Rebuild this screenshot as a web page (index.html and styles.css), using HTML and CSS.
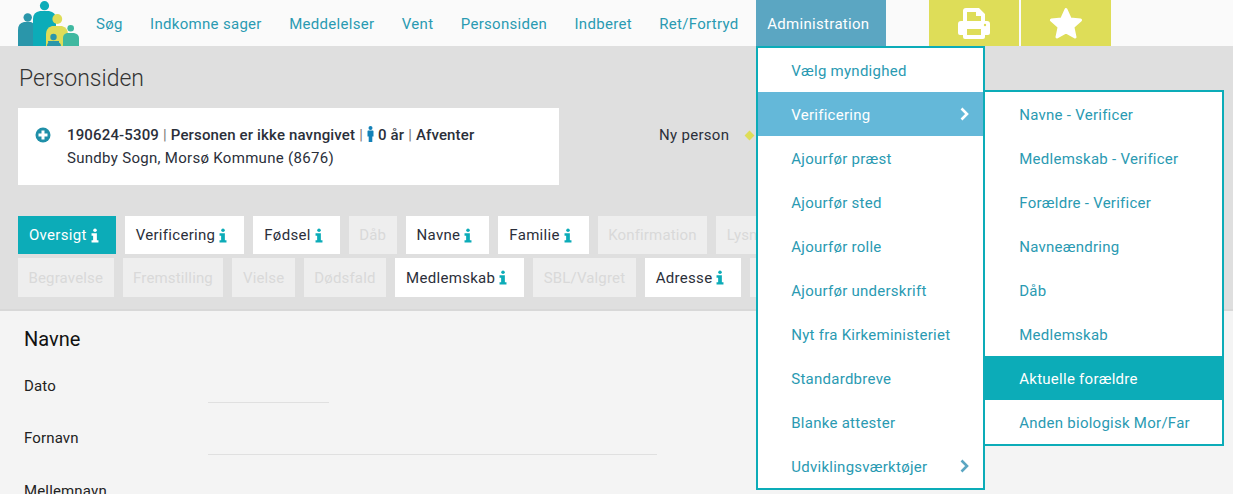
FILE: index.html
```html
<!DOCTYPE html>
<html lang="da">
<head>
<meta charset="utf-8">
<title>Personsiden</title>
<link rel="stylesheet" href="styles.css">
</head>
<body>
<svg class="defs" width="0" height="0" aria-hidden="true">
  <symbol id="info" viewBox="0 0 9 16">
    <circle cx="4.5" cy="2" r="2"/>
    <path d="M.6 5.6h6v7.8H8.4V16H.6v-2.6h1.8V8.2H.6z"/>
  </symbol>
</svg>
<header class="topbar">
  <svg class="logo" width="62" height="46" viewBox="18 0 62 46" aria-hidden="true">
    <circle cx="27.7" cy="17.5" r="4.2" fill="#2a96aa"/>
    <path d="M18 46V30q0-7 6-8h7q4 1 4 8v16z" fill="#2a96aa"/>
    <circle cx="44.5" cy="5.7" r="4.6" fill="#0cacb8"/>
    <path d="M33 46V19q0-7 7-8h9q7 1 7 8v27z" fill="#0cacb8"/>
    <circle cx="57.3" cy="19" r="4.9" fill="#dedd58"/>
    <path d="M46 46V34q0-6 6-8h10q6 2 6 8v12z" fill="#dedd58"/>
    <circle cx="70.7" cy="28.3" r="3.3" fill="#3fb8a0"/>
    <path d="M63 46V38q0-4 4-5h7q5 1 5 5v8z" fill="#3fb8a0"/>
    <circle cx="53.5" cy="37" r="3.2" fill="#2a96aa"/>
    <path d="M48 41h11v1.500h-11zM47 46q0-4 4-4h5q5 0 5 4z" fill="#2a96aa"/>
  </svg>
  <nav class="nav">
    <a class="nav-item">Søg</a>
    <a class="nav-item">Indkomne sager</a>
    <a class="nav-item">Meddelelser</a>
    <a class="nav-item">Vent</a>
    <a class="nav-item">Personsiden</a>
    <a class="nav-item">Indberet</a>
    <a class="nav-item">Ret/Fortryd</a>
    <div class="nav-item nav-active">Administration
      <ul class="menu">
        <li class="menu-item">Vælg myndighed</li>
        <li class="menu-item menu-open">Verificering
          <svg class="chev" width="9" height="14" viewBox="0 0 9 14"><path d="M1.500 1.500 7 7l-5.500 5.500" fill="none" stroke="currentColor" stroke-width="2.600"/></svg>
          <ul class="submenu">
            <li class="menu-item sub-item">Navne - Verificer</li>
            <li class="menu-item sub-item">Medlemskab - Verificer</li>
            <li class="menu-item sub-item">Forældre - Verificer</li>
            <li class="menu-item sub-item">Navneændring</li>
            <li class="menu-item sub-item">Dåb</li>
            <li class="menu-item sub-item">Medlemskab</li>
            <li class="menu-item sub-item sub-current">Aktuelle forældre</li>
            <li class="menu-item sub-item">Anden biologisk Mor/Far</li>
          </ul>
        </li>
        <li class="menu-item">Ajourfør præst</li>
        <li class="menu-item">Ajourfør sted</li>
        <li class="menu-item">Ajourfør rolle</li>
        <li class="menu-item">Ajourfør underskrift</li>
        <li class="menu-item">Nyt fra Kirkeministeriet</li>
        <li class="menu-item">Standardbreve</li>
        <li class="menu-item">Blanke attester</li>
        <li class="menu-item menu-more">Udviklingsværktøjer
          <svg class="chev" width="9" height="14" viewBox="0 0 9 14"><path d="M1.500 1.500 7 7l-5.500 5.500" fill="none" stroke="currentColor" stroke-width="2.600"/></svg>
        </li>
      </ul>
    </div>
  </nav>
  <div class="tools">
    <a class="tool">
      <svg width="32" height="31" viewBox="0 0 32 31" aria-hidden="true">
        <path fill="#fff" fill-rule="evenodd" d="M8 0h13l6 6v7h2q3 0 3 3v9q0 2-2 2h-3v2q0 2-2 2H7q-2 0-2-2v-2H2q-2 0-2-2v-9q0-3 3-3h2V3q0-3 3-3zm1 4v9h14V8h-5V4zm0 17v6h14v-6z"/>
        <circle cx="27" cy="17" r="1.200" fill="#dedd58"/>
      </svg>
    </a>
    <a class="tool">
      <svg width="34" height="32" viewBox="0 0 34 32" aria-hidden="true">
        <path fill="#fff" stroke="#fff" stroke-width="3" stroke-linejoin="round" d="M17 2.500l4.300 9.500 10.200 1.100-7.600 6.900 2.100 10-9-5.100-9 5.100 2.100-10L2.500 13.100 12.700 12z"/>
      </svg>
    </a>
  </div>
</header>
<section class="band">
  <h1 class="title">Personsiden</h1>
  <div class="person-row">
    <div class="card">
      <svg class="plus" width="16" height="16" viewBox="0 0 16 16" aria-hidden="true">
        <circle cx="8" cy="8" r="7.500" fill="#1f8fa8"/>
        <path d="M3.500 6.500h3v-3h3v3h3v3h-3v3h-3v-3h-3z" fill="#fff"/>
      </svg>
      <div class="card-text">
        <p class="card-line"><b>190624-5309</b> <span class="sep">|</span> <b>Personen er ikke navngivet</b> <span class="sep">|</span> <svg class="person" width="7" height="16" viewBox="0 0 7 16" aria-hidden="true"><circle cx="3.500" cy="2" r="2"/><path d="M.5 5.200Q.5 4.500 1.200 4.500h4.600q.7 0 .7.7v5.300H5.300V16H1.700v-5.500H.5z"/></svg> <b>0 år</b> <span class="sep">|</span> <b>Afventer</b></p>
        <p class="card-line">Sundby Sogn, Morsø Kommune (8676)</p>
      </div>
    </div>
    <div class="status">Ny person <span class="diamond"></span></div>
  </div>
  <div class="tabs">
    <a class="tab tab-info tab-current">Oversigt <svg class="i" width="8" height="15"><use href="#info"/></svg></a>
    <a class="tab tab-info">Verificering <svg class="i" width="8" height="15"><use href="#info"/></svg></a>
    <a class="tab tab-info">Fødsel <svg class="i" width="8" height="15"><use href="#info"/></svg></a>
    <a class="tab tab-off">Dåb</a>
    <a class="tab tab-info">Navne <svg class="i" width="8" height="15"><use href="#info"/></svg></a>
    <a class="tab tab-info">Familie <svg class="i" width="8" height="15"><use href="#info"/></svg></a>
    <a class="tab tab-off">Konfirmation</a>
    <a class="tab tab-off">Lysning</a>
    <a class="tab tab-off tab-low">Begravelse</a>
    <a class="tab tab-off tab-low">Fremstilling</a>
    <a class="tab tab-off tab-low">Vielse</a>
    <a class="tab tab-off tab-low">Dødsfald</a>
    <a class="tab tab-info tab-low">Medlemskab <svg class="i" width="8" height="15"><use href="#info"/></svg></a>
    <a class="tab tab-off tab-low">SBL/Valgret</a>
    <a class="tab tab-info tab-low">Adresse <svg class="i" width="8" height="15"><use href="#info"/></svg></a>
    <a class="tab tab-off tab-low">Øvrige</a>
  </div>
</section>
<main class="content">
  <h2 class="section-title">Navne</h2>
  <div class="field"><label class="label">Dato</label><span class="line line-short"></span></div>
  <div class="field"><label class="label">Fornavn</label><span class="line"></span></div>
  <div class="field"><label class="label">Mellemnavn</label><span class="line"></span></div>
</main>
</body>
</html>
```
FILE: styles.css
```css
* { box-sizing: border-box; }
html, body { height: 100%; overflow: hidden; }
body {
  margin: 0;
  background: #f4f4f4;
  font-family: Roboto, "Liberation Sans", sans-serif;
  font-size: 15px;
  color: #2b2f3a;
}
.defs { display: block; height: 0; }
.topbar {
  display: flex;
  height: 46px;
  background: #fafafa;
  padding-left: 18px;
}
.logo { flex: none; }
.nav { display: flex; margin-left: 2.300px; }
.nav-item {
  display: block;
  padding: 0 13.700px;
  line-height: 48px;
  color: #2a9ab2;
  letter-spacing: .3px;
  white-space: nowrap;
}
.nav-active {
  position: relative;
  z-index: 5;
  width: 130px;
  padding: 0 11px;
  margin-left: 4px;
  background: #5ba6c2;
  color: #fff;
}
.menu, .submenu {
  list-style: none;
  margin: 0;
  padding: 0;
  background: #fff;
  border: 2px solid #0cacb8;
  letter-spacing: .26px;
}
.menu {
  position: absolute;
  top: 46px;
  left: 0;
  width: 229px;
}
.menu-item {
  position: relative;
  height: 44px;
  padding-left: 33px;
  line-height: 47px;
  color: #2a9ab2;
}
.menu-open { background: #64b8d9; color: #fff; }
.chev {
  position: absolute;
  right: 14px;
  top: 15px;
}
.menu-more .chev { color: #5ba6c2; }
.submenu {
  position: absolute;
  top: -2px;
  left: 225px;
  width: 241px;
}
.sub-item { padding-left: 34px; color: #2a9ab2; }
.sub-current { background: #0cacb8; color: #fff; }
.tools {
  display: flex;
  gap: 2px;
  margin-left: 43px;
}
.tool {
  display: flex;
  align-items: center;
  justify-content: center;
  width: 90px;
  height: 46px;
  background: #dedd58;
}
.band {
  height: 265px;
  padding: 0 18px;
  background: #dfdfdf;
  border-bottom: 2px solid #d8d8d8;
  letter-spacing: .3px;
}
.title {
  margin: 0;
  padding: 20px 0 0 1px;
  font-size: 23px;
  line-height: 26px;
  font-weight: 300;
  letter-spacing: 0;
  color: #333;
}
.person-row {
  display: flex;
  align-items: flex-start;
  margin-top: 16px;
}
.card {
  display: flex;
  width: 541px;
  height: 77px;
  padding: 16px 17px;
  background: #fff;
}
.plus { flex: none; margin: 3px 16px 0 0; }
.card-text { line-height: 23px; }
.card-line { margin: 0; white-space: nowrap; }
.card-line b { font-weight: 500; letter-spacing: .15px; }
.sep { color: #777; letter-spacing: 0; }
.person { fill: #1381b8; vertical-align: -2px; }
.status {
  display: flex;
  align-items: center;
  gap: 17px;
  margin: 16px 0 0 100px;
  line-height: 22px;
  white-space: nowrap;
}
.diamond {
  width: 7px;
  height: 7px;
  background: #dedd58;
  transform: rotate(45deg);
}
.tabs {
  display: flex;
  flex-wrap: wrap;
  gap: 4px 9px;
  width: 840px;
  margin-top: 31px;
}
.tab {
  display: flex;
  align-items: center;
  gap: 4px;
  height: 38px;
  padding: 0 11px;
  background: #fff;
  white-space: nowrap;
}
.tab-info { padding-right: 17px; }
.tab-low { height: 39px; }
.tab-current { background: #0cacb8; color: #fff; }
.tab-off { padding: 0 10.500px; background: #eeeeee; color: #d9d9d9; letter-spacing: .15px; }
.i { fill: #0cacb8; }
.tab-current .i { fill: #fff; }
.content { padding: 0 24px; }
.section-title {
  margin: 0;
  padding-top: 16px;
  font-size: 20px;
  line-height: 24px;
  font-weight: 400;
  color: #111;
}
.field {
  display: flex;
  height: 52.500px;
  padding-top: 24.700px;
  letter-spacing: .15px;
  line-height: 20px;
}
.label { width: 184px; flex: none; color: #222; }
.line {
  display: block;
  width: 449px;
  height: 1px;
  margin-top: 26.300px;
  background: #e0e0e0;
}
.line-short { width: 121px; }
```
